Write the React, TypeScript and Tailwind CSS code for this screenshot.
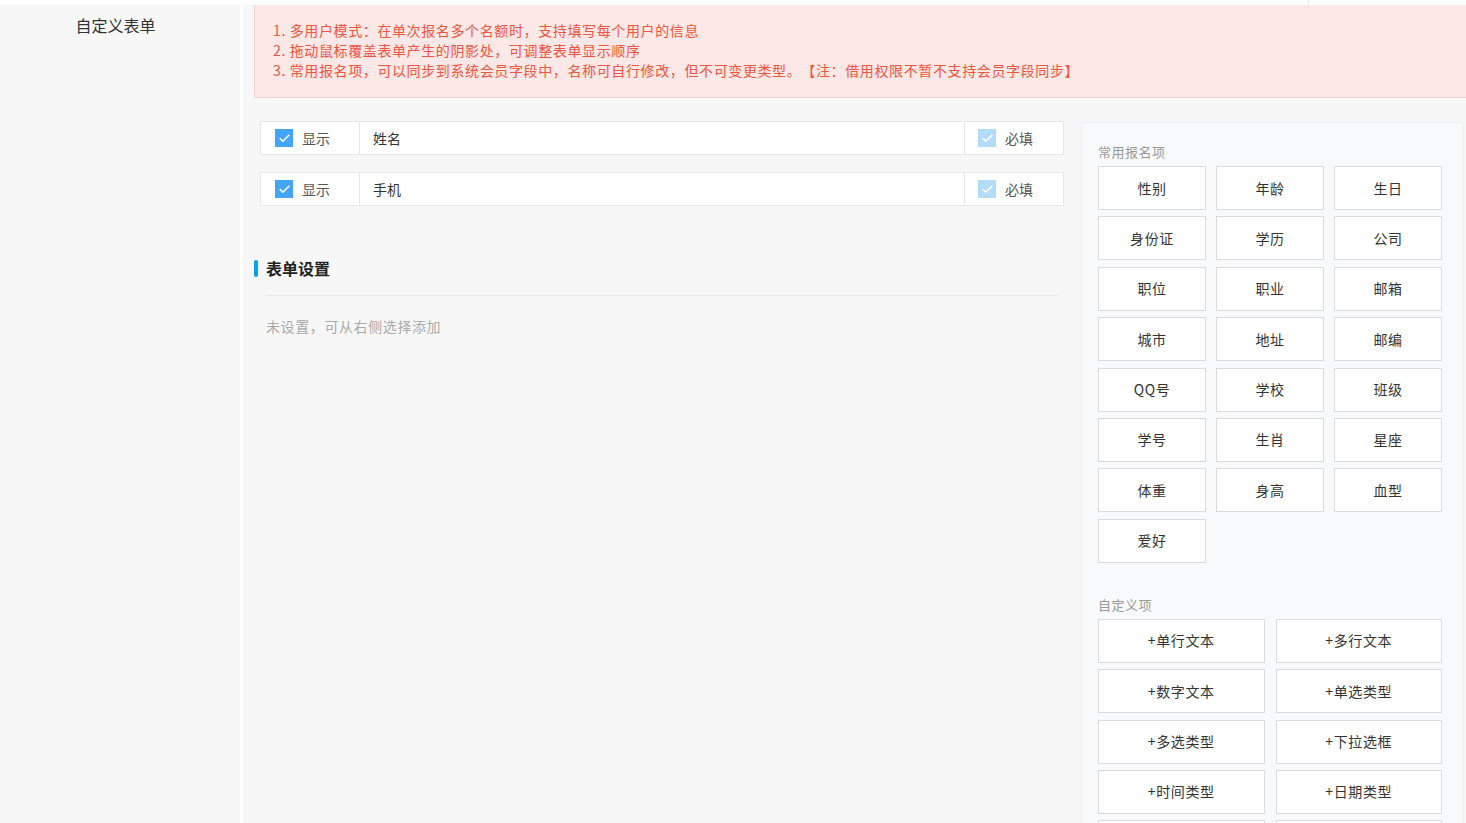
import { Check } from "lucide-react";

const commonItems = [
  "性别", "年龄", "生日",
  "身份证", "学历", "公司",
  "职位", "职业", "邮箱",
  "城市", "地址", "邮编",
  "QQ号", "学校", "班级",
  "学号", "生肖", "星座",
  "体重", "身高", "血型",
  "爱好",
];

// last row is cut off by the viewport, only its top edge shows
const customItems = [
  "+单行文本", "+多行文本",
  "+数字文本", "+单选类型",
  "+多选类型", "+下拉选框",
  "+时间类型", "+日期类型",
  "", "",
];

const fields = ["姓名", "手机"];

function Box({ light }: { light?: boolean }) {
  return (
    <span
      className={`flex h-[18px] w-[18px] items-center justify-center ${light ? "bg-[#b3dcfb]" : "bg-[#42a6f5]"}`}
    >
      <Check className="h-[13px] w-[13px] text-white" strokeWidth={3} />
    </span>
  );
}

export default function App() {
  return (
    <div
      className="flex h-[823px] flex-col overflow-hidden bg-white text-[#333] [text-spacing-trim:space-all]"
      style={{ fontFamily: '"Noto Sans CJK SC", "Noto Sans", sans-serif' }}
    >
      {/* top strip */}
      <div className="flex h-[5px] shrink-0 justify-end">
        <div className="w-[158px] border-l border-[#e8e8e8]" />
      </div>

      <div className="flex min-h-0 flex-1">
        {/* label column */}
        <div className="w-[240px] shrink-0 bg-[#f7f7f7] pr-[9px] pt-[8px] text-center">
          <span className="text-[16px] leading-[20px] text-[#333]">自定义表单</span>
        </div>

        {/* main */}
        <div className="ml-[3px] flex-1 bg-[#f7f7f7] pl-[11px]">
          {/* notice */}
          <div className="rounded-bl-[3px] border-b border-l border-[#f2d3cf] bg-[#fce8e6] pb-[17px] pl-[18px] pt-[15px] text-[14px] leading-[20px] tracking-[0.62px] text-[#f0553f]">
            <p>1. 多用户模式：在单次报名多个名额时，支持填写每个用户的信息</p>
            <p>2. 拖动鼠标覆盖表单产生的阴影处，可调整表单显示顺序</p>
            <p>3. 常用报名项，可以同步到系统会员字段中，名称可自行修改，但不可变更类型。【注：借用权限不暂不支持会员字段同步】</p>
          </div>

          <div className="flex">
            {/* left form area */}
            <div className="w-[810px] shrink-0">
              <div className="flex flex-col gap-[17px] pl-[6px] pt-[23px]">
                {fields.map((f) => (
                  <div
                    key={f}
                    className="flex h-[34px] w-[804px] border border-[#e6e6e6] bg-white text-[14px]"
                  >
                    <div className="flex w-[99px] items-center gap-[9px] border-r border-[#e6e6e6] pl-[14px]">
                      <Box />
                      <span className="text-[#555]">显示</span>
                    </div>
                    <div className="flex flex-1 items-center pl-[13px] text-[#333]">{f}</div>
                    <div className="flex w-[99px] items-center gap-[9px] border-l border-[#e6e6e6] pl-[13px]">
                      <Box light />
                      <span className="text-[#555]">必填</span>
                    </div>
                  </div>
                ))}
              </div>

              <div className="mt-[52px] flex items-center">
                <span className="h-[17px] w-[4px] rounded-full bg-[#0aa0f5]" />
                <span className="ml-[8px] text-[16px] font-bold leading-[20px] text-[#222]">表单设置</span>
              </div>
              <div className="ml-[12px] mr-[6px] mt-[17px] border-t border-[#e8e8e8]" />
              <p className="ml-[12px] mt-[20px] text-[14px] leading-[20px] tracking-[0.6px] text-[#aaa]">
                未设置，可从右侧选择添加
              </p>
            </div>

            {/* right panel */}
            <div className="ml-[17px] mt-[24px] w-[383px] rounded-[3px] border border-[#eceef1] bg-[#f8f9fb] pl-[16px] pt-[20px]">
              <p className="text-[13px] leading-[18px] tracking-[0.5px] text-[#999]">常用报名项</p>
              <div className="mt-[5px] grid w-[344px] grid-cols-3 gap-x-[10px] gap-y-[6.4px]">
                {commonItems.map((c) => (
                  <button
                    key={c}
                    className="flex h-[44px] items-center justify-center border border-[#dcdcdc] bg-white text-[14px] tracking-[0.6px] text-[#333]"
                  >
                    {c}
                  </button>
                ))}
              </div>

              <p className="mt-[33px] text-[13px] leading-[18px] tracking-[0.5px] text-[#999]">自定义项</p>
              <div className="mt-[5px] grid w-[344px] grid-cols-2 gap-x-[11px] gap-y-[6.4px]">
                {customItems.map((c, i) => (
                  <button
                    key={i}
                    className="flex h-[44px] items-center justify-center border border-[#dcdcdc] bg-white text-[14px] tracking-[0.6px] text-[#333]"
                  >
                    {c}
                  </button>
                ))}
              </div>
            </div>
          </div>
        </div>
      </div>
    </div>
  );
}
